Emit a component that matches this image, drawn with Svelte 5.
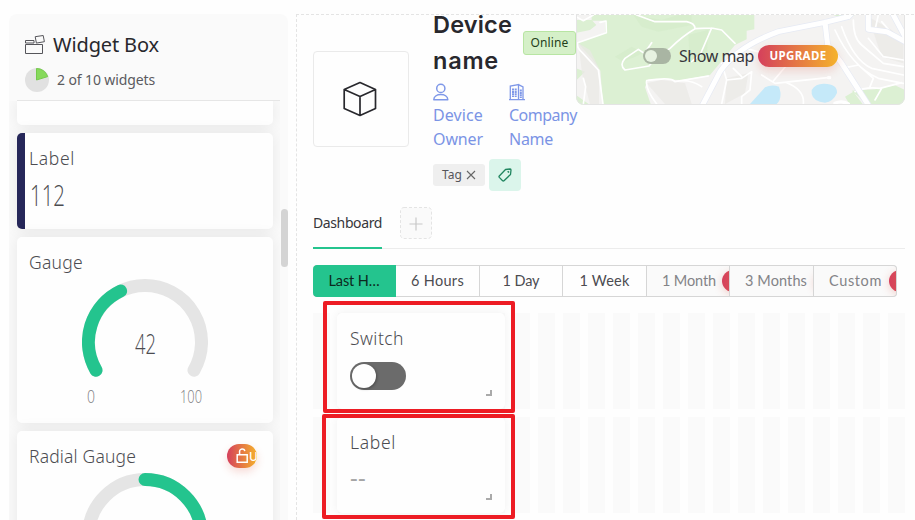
<script>
  const ranges = [
    { label: 'Last H…', w: 83, text: 51, active: true },
    { label: '6 Hours', w: 84, text: 53 },
    { label: '1 Day', w: 83, text: 37 },
    { label: '1 Week', w: 84, text: 50 },
    { label: '1 Month', w: 83, text: 54, locked: true, chip: true },
    { label: '3 Months', w: 84, text: 62, locked: true },
    { label: 'Custom', w: 83, text: 53, locked: true, chip: true }
  ];
  const columns = Array.from({ length: 24 });

  // Tracks a label out (or in) so that it fills the given width.
  function fit(node, width) {
    const natural = node.getBoundingClientRect().width;
    node.style.letterSpacing = (width - natural) / node.textContent.length + 'px';
  }

  // Condenses numerals horizontally to the given width.
  function condense(node, width) {
    const natural = node.getBoundingClientRect().width;
    node.style.transform = `scaleX(${width / natural})`;
  }
</script>

<div class="page">
  <aside class="sidebar">
    <header class="side-head">
      <div class="side-title">
        <svg width="20" height="20" viewBox="0 0 20 20" fill="none" stroke="#55555a" stroke-width="1">
          <path d="M.5 9.500h17v9H.5zM.5 5.500h8.500v2.500H.5zM10.200 1.700l8-1.200 1.200 6.200-8 1.400z" />
        </svg>
        <span use:fit={106}>Widget Box</span>
      </div>
      <div class="side-count">
        <svg width="24" height="24" viewBox="0 0 24 24">
          <circle cx="12" cy="12" r="12" fill="#e1e1e1" />
          <path d="M11.5 12V.5A11.5 11.5 0 0 1 22.7 8.6z" fill="#86d95b" stroke="#74c94b" />
        </svg>
        <span use:fit={98}>2 of 10 widgets</span>
      </div>
    </header>
    <div class="list">
      <div class="card stub"></div>
      <div class="card label-card">
        <div class="card-title"><span use:fit={46}>Label</span></div>
        <div class="value"><span class="num" use:condense={35}>112</span></div>
      </div>
      <div class="card gauge-card">
        <div class="card-title"><span use:fit={54}>Gauge</span></div>
        <div class="dial">
          <svg width="126" height="100" viewBox="0 0 126 100" fill="none" stroke-width="13" stroke-linecap="round">
            <path d="M14 91.2A56.5 56.5 0 1 1 112 91.2" stroke="#e5e5e5" />
            <path d="M14 91.2A56.5 56.5 0 0 1 38.6 12" stroke="#24c48e" />
          </svg>
          <span class="reading"><span class="num" use:condense={21}>42</span></span>
        </div>
        <div class="limits">
          <span class="num" use:condense={8}>0</span>
          <span class="num" use:condense={22}>100</span>
        </div>
      </div>
      <div class="card radial-card">
        <div class="radial-head">
          <div class="card-title"><span use:fit={107}>Radial Gauge</span></div>
          <div class="lock">
            <svg width="13" height="16" viewBox="0 0 13 16" fill="none" stroke="#fff" stroke-width="1.5">
              <path d="M1.200 6.700h10v7.500h-10zM3.600 6.500V3.800a2.600 2.600 0 0 1 5.200-.6" />
            </svg><b>U</b>
          </div>
        </div>
        <svg class="ring" width="126" height="126" viewBox="0 0 126 126" fill="none" stroke-width="13" stroke-linecap="round">
          <circle cx="63" cy="63" r="56.5" stroke="#e5e5e5" />
          <path d="M63 6.5A56.5 56.5 0 0 1 119.5 63" stroke="#24c48e" />
        </svg>
      </div>
    </div>
    <i class="scroll"></i>
  </aside>

  <main>
    <section class="device">
      <div class="thumb">
        <svg width="34" height="36" viewBox="0 0 34 36" fill="none" stroke="#28282d" stroke-width="1.7" stroke-linejoin="round">
          <path d="M17 1.5L32.5 8.5V27.5L17 34.5L1.2 27.5V8.5zM1.2 8.5L17 15.5L32.5 8.5M17 15.5V34.5" />
        </svg>
      </div>
      <div class="info">
        <div class="name-row">
          <h1><span use:fit={79}>Device</span><br /><span use:fit={66}>name</span></h1>
          <span class="online"><span use:fit={38}>Online</span></span>
        </div>
        <div class="meta">
          <div class="who">
            <svg width="16" height="18" viewBox="0 0 16 18" fill="none" stroke="#7f98e8" stroke-width="1.5">
              <circle cx="7.8" cy="5.4" r="4.1" />
              <path d="M.8 16.700c0-7 14-7 14 0z" stroke-linejoin="round" />
            </svg>
            <p><span use:fit={50}>Device</span><br /><span use:fit={50}>Owner</span></p>
          </div>
          <div>
            <svg width="16" height="18" viewBox="0 0 16 18" fill="none" stroke="#7f98e8" stroke-width="1.3">
              <path d="M1.300 16.500V3L9.500 1.500V16.500M9.500 1.600L14 4V16.500M0 16.700H16" />
              <path d="M4 5.500V14M6.700 5.500V14M11.800 6.500V15" stroke-width="2" stroke-dasharray="2 .4" />
            </svg>
            <p><span use:fit={68}>Company</span><br /><span use:fit={44}>Name</span></p>
          </div>
        </div>
        <div class="tags">
          <span class="tag"><span use:fit={20}>Tag</span>
            <svg width="10" height="10" viewBox="0 0 10 10" stroke="#666" stroke-width="1.100"><path d="M1 1L9 9M9 1L1 9" /></svg>
          </span>
          <span class="add-tag">
            <svg width="14" height="14" viewBox="0 0 14 14" fill="none" stroke="#20855f" stroke-width="1.300" stroke-linejoin="round">
              <path d="M7.500 1.500L12.200 1Q13 1 13 2L12.500 6.500L6 12.700Q5.300 13.300 4.600 12.700L1.300 9.400Q.7 8.700 1.300 8z" />
              <path d="M9.700 3.200l1.300 1.300" stroke-width="1.600" />
            </svg>
          </span>
        </div>
      </div>
      <div class="map">
        <svg class="terrain" width="329" height="90" viewBox="3 45 987 270" preserveAspectRatio="none" fill="none" stroke-linecap="round" stroke-linejoin="round">
          <path fill="#f4f3f2" d="M3 45H990V315H3z" />
          <g fill="#dcf0d3">
            <path d="M50 45H538V88L515 92V118L480 135L405 225L320 240L220 238L210 262L228 315H84L76 212L50 175L8 128L90 98V62H50z" />
            <path d="M3 60H50L64 75L45 90L5 98zM3 205L30 215L5 240zM3 285L45 315H3z" />
            <path d="M775 45H840L815 58zM830 272L900 268L960 256L990 270V315H880zM810 290L835 275L865 315H825z" />
          </g>
          <g fill="#d3ebc8" opacity=".55">
            <path d="M175 45L260 60L310 45H350L350 75L250 95L200 80zM120 170L170 140L205 160L145 185zM340 105L400 90L395 175L345 190z" />
          </g>
          <g fill="#eae8e6">
            <path d="M10 130L45 150L72 205V312H45L22 225zM215 250L260 240L330 250L350 312H270zM455 235L520 220L510 280L450 312zM880 50L950 90L985 125V190L920 170z" opacity=".7" />
          </g>
          <g fill="#c5e9f9">
            <path d="M525 312L570 262Q590 252 612 260L616 275Q619 300 605 312z" />
            <path d="M710 270Q722 250 748 251Q788 252 786 279Q775 305 750 308Q715 305 710 282z" />
          </g>
          <g stroke="#fff" stroke-width="5">
            <path d="M75 67L93 63L94 98L8 128Q3 140 22 158L70 210L84 312M55 45L25 62L3 50" />
            <path d="M185 45L240 65H335Q360 70 360 86Q320 110 285 145Q240 175 222 198L150 210Q132 195 150 175L190 148L230 175L285 162M360 86L410 84L440 90L480 130M410 84L375 165L350 185M230 128L215 150" />
            <path d="M245 312Q210 265 215 242Q290 230 300 245L400 228M300 245Q345 235 380 260M440 190L455 240L440 312M455 240L500 235L530 215L525 270L500 290V312M500 230L475 205M560 225L600 250L765 232M595 243L640 190M635 248Q690 270 685 312M25 235L32 260L25 312M510 145L570 160L640 145" />
            <path d="M780 90Q830 200 910 235L985 250M800 80Q835 180 890 205L985 225M835 60Q835 115 860 135L925 190L985 200M880 115L925 170L985 180M910 45L900 90M920 65L950 100M800 205L850 195L895 235L885 260M840 275Q870 260 915 265L980 248M920 265L900 300" />
          </g>
          <path stroke="#e6eaf4" stroke-width="19" d="M380 320L435 215Q485 140 610 95L750 67L820 50L835 35M750 67L758 135L800 190L880 315M880 40V88L935 95L990 125M955 45L990 110" />
          <path stroke="#fff" stroke-width="15" d="M380 320L435 215Q485 140 610 95L750 67L820 50L835 35M750 67L758 135L800 190L880 315M880 40V88L935 95L990 125M955 45L990 110" />
          <path stroke="#fff" stroke-width="10" d="M760 233H764M780 310Q800 300 820 312" />
        </svg>
        <div class="map-bar">
          <span class="mini-switch"></span>
          <span class="show"><span use:fit={75}>Show map</span></span>
          <span class="upgrade"><span use:fit={57}>UPGRADE</span></span>
        </div>
      </div>
    </section>

    <nav>
      <span class="tab"><span use:fit={69}>Dashboard</span></span>
      <span class="plus">
        <svg width="32" height="32" viewBox="0 0 32 32" fill="none">
          <rect x=".5" y=".5" width="31" height="31" rx="3.500" fill="#fafafa" stroke="#e4e4e4" stroke-dasharray="3 2" />
          <path d="M9.500 17H22.500M16 10.500V23.500" stroke="#c8c8c8" stroke-width="1.200" />
        </svg>
      </span>
    </nav>

    <div class="ranges">
      {#each ranges as r}
        <div class="range" class:active={r.active} class:locked={r.locked} style="width: {r.w}px">
          <span use:fit={r.text}>{r.label}</span>
          {#if r.locked}<i class="chip" class:hidden-chip={!r.chip}></i>{/if}
        </div>
      {/each}
    </div>

    <div class="board">
      {#each [0, 1] as row}
        <div class="row">
          {#each columns as _}<i></i>{/each}
        </div>
      {/each}
      <div class="widget first">
        <div class="card-title"><span use:fit={54}>Switch</span></div>
        <span class="toggle"></span>
        <i class="corner"></i>
      </div>
      <div class="widget second">
        <div class="card-title"><span use:fit={46}>Label</span></div>
        <span class="empty"><span use:fit={16}>--</span></span>
        <i class="corner"></i>
      </div>
      <div class="mark mark-a"></div>
      <div class="mark mark-b"></div>
    </div>
  </main>
</div>

<style>
  :global(body) { background: #fefefe; overflow: hidden; }
  .page {
    display: flex; gap: 8px; box-sizing: border-box;
    width: 915px; height: 520px; padding: 14px 0 0 9px; overflow: hidden;
    font-family: "Noto Sans", "Open Sans", sans-serif; color: #28282d;
  }
  .page :global(span) { white-space: nowrap; }
  svg { display: block; flex: none; }

  .sidebar {
    position: relative; display: flex; flex-direction: column; flex: none;
    width: 279px; height: 506px; background: #fafafa; border-radius: 8px 8px 0 0;
  }
  .side-head { height: 87px; margin: 0 8px; box-sizing: border-box; border-bottom: 1px solid #e6e6e6; padding: 17px 0 0 8px; }
  .side-title { display: flex; gap: 8px; height: 28px; font-size: 20px; line-height: 28px; }
  .side-title svg { margin-top: 4px; }
  .side-count { display: flex; gap: 8px; margin-top: 9px; font-size: 14px; line-height: 24px; color: #5b5b60; }
  .list { height: 419px; width: 271px; box-sizing: border-box; padding-left: 8px; overflow: hidden; display: flex; flex-direction: column; gap: 8px; }
  .card { flex: none; width: 256px; box-sizing: border-box; background: #fefefe; border-radius: 5px; box-shadow: 0 0 16px rgba(0, 0, 0, .08); }
  .stub { height: 24px; border-radius: 0 0 5px 5px; }
  .label-card { height: 96px; border-left: 8px solid #262759; padding: 13px 0 0 4px; }
  .gauge-card { height: 186px; padding: 13px 12px 0; }
  .radial-card { height: 186px; padding: 13px 16px 0 12px; }
  .card-title { font-size: 17.5px; line-height: 24px; height: 24px; color: #4c4c51; font-weight: 350; }
  .num { display: inline-block; transform-origin: 0 50%; font-family: "Open Sans", "Noto Sans", sans-serif; font-weight: 300; }
  .value { font-size: 29px; line-height: 40px; margin-top: 5px; padding-left: 1px; color: #4c4c51; }
  .dial { position: relative; margin: 5px 0 0 53px; width: 126px; height: 100px; }
  .reading { position: absolute; left: 53px; top: 44px; font-size: 28px; line-height: 40px; color: #4c4c51; }
  .limits { display: flex; height: 24px; margin: 5px 0 0 58px; font-size: 18px; line-height: 24px; color: #7c7c80; }
  .limits .num:first-child { margin-right: 83px; }
  .radial-head { display: flex; justify-content: space-between; height: 24px; }
  .lock {
    display: flex; align-items: center; box-sizing: border-box; width: 30px; height: 24px; padding-left: 9px;
    overflow: hidden; border-radius: 12px; color: #fff; font-size: 12px;
    background: linear-gradient(90deg, #d5405c, #f5b22c); box-shadow: 0 4px 9px rgba(220, 80, 60, .2);
  }
  .lock svg { margin-top: -1px; }
  .lock b { font-weight: 500; }
  .ring { margin: 5px 0 0 53px; }
  .scroll { position: absolute; right: 0; top: 195px; width: 7px; height: 58px; border-radius: 4px; background: #d4d4d4; }

  main { flex: none; width: 618px; height: 506px; box-sizing: border-box; border: 1px dashed #e4e4e4; border-right: 0; border-bottom: 0; overflow: hidden; padding-left: 16px; }
  .device { display: flex; height: 176px; }
  .thumb { flex: none; box-sizing: border-box; width: 96px; height: 96px; margin-top: 36px; border: 1px solid #eaeaea; border-radius: 4px; display: flex; align-items: center; justify-content: center; }
  .thumb svg { margin-left: -2px; }
  .info { flex: none; width: 143px; margin: -8px 0 0 24px; }
  .name-row { display: flex; height: 72px; justify-content: space-between; align-items: center; }
  h1 { margin: 0; font: 600 23.5px/36px Inter, "Liberation Sans", sans-serif; color: #28282d; }
  .online { flex: none; width: 53px; height: 24px; box-sizing: border-box; border: 1px solid #b8e5a3; border-radius: 3px; background: #d5f0c8; display: flex; justify-content: center; font-size: 12px; line-height: 22px; color: #24401a; }
  .meta { display: flex; margin-top: 4px; height: 76px; color: #7b94e5; font-size: 16px; line-height: 24px; }
  .who { flex: none; width: 76px; }
  .meta p { margin: 2px 0 0; }
  .tags { display: flex; align-items: center; gap: 4px; height: 32px; }
  .tag { display: flex; align-items: center; gap: 4px; box-sizing: border-box; width: 52px; height: 22px; padding-left: 9px; border-radius: 3px; background: #efefef; font-size: 12px; line-height: 22px; color: #55555a; }
  .add-tag { display: flex; align-items: center; justify-content: center; width: 32px; height: 32px; border-radius: 4px; background: #dbf5eb; }

  .map { position: relative; flex: none; box-sizing: border-box; width: 329px; height: 90px; border-radius: 0 0 8px 8px; overflow: hidden; }
  .map::after { content: ""; position: absolute; inset: -1px 0 0; border: 1px solid #e4e4e4; border-radius: 0 0 8px 8px; }
  .map-bar { position: absolute; left: 67px; top: 30px; display: flex; align-items: center; height: 22px; }
  .mini-switch { width: 28px; height: 16px; border-radius: 8px; background: #a9b5a3; display: flex; align-items: center; }
  .mini-switch::before { content: ""; width: 12px; height: 12px; margin-left: 2px; border-radius: 50%; background: #e7f2e1; }
  .show { width: 75px; margin: 0 4px 0 8px; font-size: 16px; line-height: 22px; color: #36363b; }
  .upgrade { width: 80px; height: 22px; border-radius: 11px; display: flex; justify-content: center; background: linear-gradient(90deg, #d5405c, #f5b22c); color: #fff; font-size: 11.5px; line-height: 22px; font-weight: 700; box-shadow: 0 4px 10px rgba(220, 80, 60, .2); }

  nav { display: flex; height: 42px; margin-top: 16px; box-shadow: inset 0 -1px #ececec; width: 592px; gap: 18px; }
  .tab { width: 69px; box-sizing: border-box; border-bottom: 2px solid #24c48e; font-size: 14px; line-height: 32px; color: #36363b; }

  .ranges { display: flex; box-sizing: border-box; width: 584px; height: 32px; margin-top: 16px; border-radius: 4px; overflow: hidden; background: #fefefe; box-shadow: inset 0 0 0 1px #d6d6d6; }
  .range { position: relative; flex: none; box-sizing: border-box; border: 1px solid #d6d6d6; border-left: 0; overflow: hidden; text-align: center; font: 400 14.5px/30px Lato, "Open Sans", sans-serif; color: #4c4c51; }
  .range.active { background: #24c48e; border-color: #24c48e; border-radius: 4px 0 0 4px; color: #0c2a20; }
  .range.locked { background: #fafafa; color: #838387; text-align: left; padding-left: 15px; }
  .range:last-child { border-radius: 0 4px 4px 0; }
  .chip { position: absolute; left: 75px; top: 4px; width: 70px; height: 22px; border-radius: 11px; background: linear-gradient(90deg, #d5405c, #f5b22c 80px); box-shadow: 0 2px 8px rgba(220, 80, 60, .25); }
  .hidden-chip { left: 84px; }

  .board { position: relative; width: 592px; margin-top: 16px; display: flex; flex-direction: column; gap: 8px; }
  .row { display: flex; gap: 8px; height: 96px; }
  .row i { flex: none; width: 17px; background: #fafafa; }
  .widget { position: absolute; left: 24px; box-sizing: border-box; width: 168px; height: 96px; padding: 13px 13px; background: #fefefe; border-radius: 5px; box-shadow: 0 0 10px rgba(0, 0, 0, .06); }
  .first { top: 0; }
  .second { top: 104px; }
  .toggle { display: flex; align-items: center; width: 56px; height: 28px; margin-top: 12px; border-radius: 14px; background: #6b6b6b; }
  .toggle::before { content: ""; width: 24px; height: 24px; margin-left: 2px; border-radius: 50%; background: #fefefe; box-shadow: 1px 1px 3px rgba(0, 0, 0, .3); }
  .empty { display: block; margin-top: 7px; font-size: 24px; line-height: 32px; color: #a5a5a5; }
  .corner { position: absolute; right: 13px; bottom: 13px; width: 4px; height: 4px; border: solid #aaa; border-width: 0 2px 2px 0; }
  .mark { position: absolute; box-sizing: border-box; border: 4px solid #ed1c24; border-radius: 2px; }
  .mark-a { left: 10px; top: -12px; width: 192px; height: 112px; }
  .mark-b { left: 9px; top: 101px; width: 193px; height: 105px; }
</style>
